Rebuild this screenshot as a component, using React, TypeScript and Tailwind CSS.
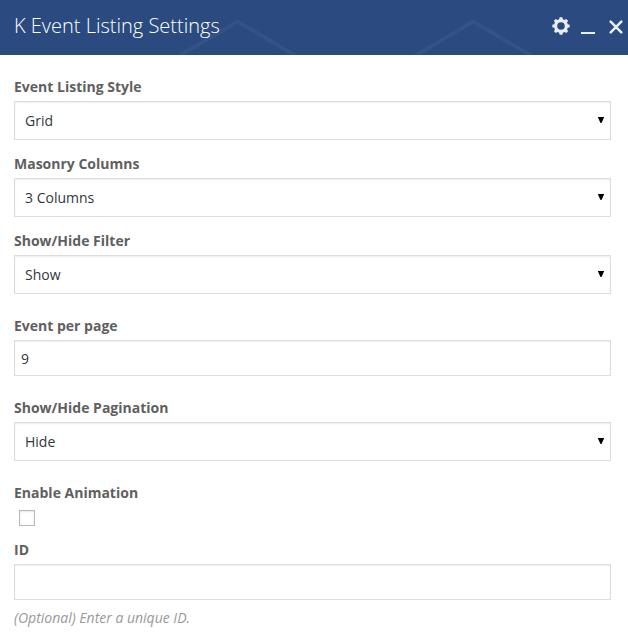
import type { ReactNode } from "react";

const gearPoints = Array.from({ length: 32 }, (_, i) => {
  const step = i % 4;
  const radius = step < 2 ? 8.8 : 7;
  const offset = [-0.15, 0.15, 0.27, 0.515][step];
  const angle = Math.floor(i / 4) * (Math.PI / 4) + offset - Math.PI / 2;
  return `${(9 + radius * Math.cos(angle)).toFixed(2)} ${(9 + radius * Math.sin(angle)).toFixed(2)}`;
});
const gearPath = `M${gearPoints.join("L")}ZM9 5.2a3.8 3.8 0 1 0 0 7.6a3.8 3.8 0 1 0 0-7.6Z`;

function Field({ label, className = "", children }: { label: string; className?: string; children?: ReactNode }) {
  return (
    <div className={className}>
      <div className="mb-1 h-5 text-[14px] leading-5 font-bold text-[#5f5f5f]">{label}</div>
      {children}
    </div>
  );
}

function Select({ value }: { value: string }) {
  return (
    <div className="flex h-[39px] items-center justify-between border border-[#ddd] bg-white pr-[6px] pl-[10px] text-[14px] text-[#32373c] shadow-[inset_0_1px_2px_rgba(0,0,0,0.07)]">
      <span>{value}</span>
      <svg width="6" height="6" viewBox="0 0 6 6" className="mb-px">
        <path d="M0 0H6V0.5L3.5 6H2.5L0 0.5Z" fill="#000" />
      </svg>
    </div>
  );
}

function TextBox({ value = "" }: { value?: string }) {
  return (
    <div className="flex h-9 items-center border border-[#ddd] bg-white px-[6px] text-[14px] text-[#32373c] shadow-[inset_0_1px_2px_rgba(0,0,0,0.07)]">
      {value}
    </div>
  );
}

export default function App() {
  return (
    <div className="h-[637px] w-[628px] overflow-hidden bg-white font-['Open_Sans',sans-serif]">
      <header className="relative flex h-[55px] items-center justify-between bg-[#2b4b80] pl-[14px]">
        <svg className="absolute inset-0" width="628" height="55" fill="none" stroke="#315388" strokeWidth="4">
          <path d="M174 59L237.5 21.5L301 59M410 59L473 21.5L537 59" />
        </svg>
        <h1 className="relative mb-[3px] text-[20px] leading-7 font-light text-white">K Event Listing Settings</h1>
        <div className="relative mr-[5px] flex items-center text-[#e9edf4]">
          <svg className="mr-[11px] mb-[4px]" width="18" height="18" viewBox="0 0 18 18">
            <path d={gearPath} fill="currentColor" fillRule="evenodd" />
          </svg>
          <span className="mt-[11px] mr-[14px] h-[2px] w-[14px] bg-current" />
          <svg className="mb-px" width="14" height="14" viewBox="0 0 14 14" fill="none" stroke="currentColor" strokeWidth="2.5" strokeLinecap="round">
            <path d="M1.7 1.7L12.3 12.3M12.3 1.7L1.7 12.3" />
          </svg>
        </div>
      </header>
      <main className="pt-[22px] pr-[17px] pl-[14px]">
        <Field label="Event Listing Style">
          <Select value="Grid" />
        </Field>
        <Field label="Masonry Columns" className="mt-[14px]">
          <Select value="3 Columns" />
        </Field>
        <Field label="Show/Hide Filter" className="mt-[14px]">
          <Select value="Show" />
        </Field>
        <Field label="Event per page" className="mt-[22px]">
          <TextBox value="9" />
        </Field>
        <Field label="Show/Hide Pagination" className="mt-[22px]">
          <Select value="Hide" />
        </Field>
        <Field label="Enable Animation" className="mt-[22px]">
          <div className="mt-[7px] ml-[5px] size-4 border border-[#b4b9be] bg-white shadow-[inset_0_1px_2px_rgba(0,0,0,0.1)]" />
        </Field>
        <Field label="ID" className="mt-[14px]">
          <TextBox />
        </Field>
        <p className="mt-2 text-[14px] leading-5 text-[#999] italic">(Optional) Enter a unique ID.</p>
      </main>
    </div>
  );
}
